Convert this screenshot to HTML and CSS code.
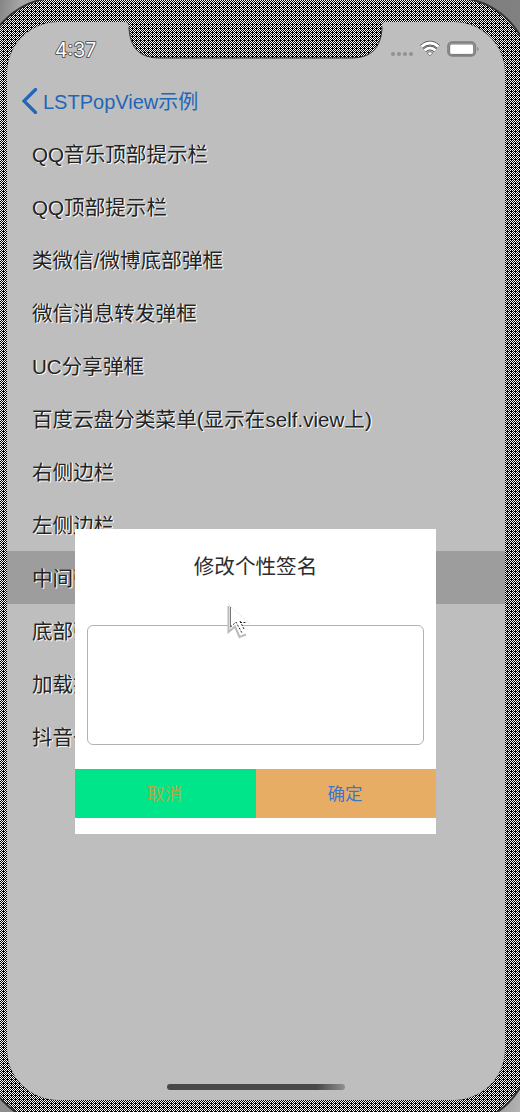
FILE: index.html
```
<!DOCTYPE html>
<html lang="zh-CN">
<head>
<meta charset="utf-8">
<title>LSTPopView示例</title>
<link rel="stylesheet" href="styles.css">
</head>
<body>
<div class="stage">
  <svg class="bezel" width="520" height="1112" viewBox="0 0 520 1112" aria-hidden="true">
    <defs>
      <pattern id="mesh" width="4" height="4" patternUnits="userSpaceOnUse" shape-rendering="crispEdges">
        <rect width="4" height="4" fill="#000"/>
        <path fill="#fff" d="M0 0h1v1H0zM2 0h1v1H2zM1 1h1v1H1zM3 1h1v1H3zM0 2h1v1H0zM2 2h1v1H2zM1 3h1v1H1z"/>
      </pattern>
    </defs>
    <rect x="-17" y="-2" width="547" height="1127" rx="75" fill="url(#mesh)" stroke="#333" stroke-width="2"/>
  </svg>
  <main class="screen">
    <header class="status">
      <span class="time">4:37</span>
      <svg class="signals" width="92" height="20" viewBox="0 0 92 20" aria-hidden="true">
        <g fill="#929292"><circle cx="6" cy="14" r="2.1"/><circle cx="12" cy="14" r="2.1"/><circle cx="18" cy="14" r="2.1"/><circle cx="24" cy="14" r="2.1"/></g>
        <g fill="none" stroke="#444" stroke-width="4.2"><path d="M34.500 6.800Q43 -.7 51.500 6.800M37.500 10.400Q43 5.600 48.500 10.400"/></g>
        <g fill="none" stroke="#fff" stroke-width="2.800"><path d="M34.500 6.800Q43 -.7 51.500 6.800M37.500 10.400Q43 5.600 48.500 10.400"/></g>
        <path d="M40.2 12.800Q43 10.600 45.800 12.800L43 15.800z" fill="#fff" stroke="#555" stroke-width=".7"/>
        <rect x="61" y="2.100" width="27.300" height="13.800" rx="4" fill="#bebebe" stroke="#808080" stroke-width="1.700"/>
        <rect x="62.700" y="4" width="24" height="10.400" rx="2" fill="#fff" stroke="#444" stroke-width=".7"/>
        <path d="M90.400 6.800q2.200 2.200 0 4.400z" fill="#777"/>
      </svg>
    </header>
    <nav class="nav">
      <svg width="16" height="26" viewBox="0 0 16 26" aria-hidden="true"><path d="M13.500 1.500L2 13l11.500 11.500" fill="none" stroke="#2266b8" stroke-width="3.200" stroke-linecap="round"/></svg>
      <span>LSTPopView示例</span>
    </nav>
    <ul class="list">
      <li>QQ音乐顶部提示栏</li>
      <li>QQ顶部提示栏</li>
      <li>类微信/微博底部弹框</li>
      <li>微信消息转发弹框</li>
      <li>UC分享弹框</li>
      <li>百度云盘分类菜单(显示在self.view上)</li>
      <li>右侧边栏</li>
      <li>左侧边栏</li>
      <li class="selected">中间弹框</li>
      <li>底部弹框</li>
      <li>加载提示</li>
      <li>抖音一</li>
    </ul>
    <div class="home"></div>
  </main>
  <svg class="notch" width="262" height="38" viewBox="0 0 262 38" aria-hidden="true">
    <path d="M0 0H262V1H260Q257 1 257 6V8Q255 37 227 37H34Q6 37 4 8V6Q4 1 0 1z" fill="url(#mesh)"/>
    <path d="M4 6V8Q6 37 34 37H227Q255 37 257 8V6" fill="none" stroke="#333" stroke-width="1"/>
  </svg>
  <section class="dialog">
    <h1>修改个性签名</h1>
    <div class="field"></div>
    <div class="actions"><button class="cancel">取消</button><button class="confirm">确定</button></div>
  </section>
  <svg class="cursor" width="34" height="44" viewBox="0 0 34 44" aria-hidden="true">
    <path d="M5 4V33L12 27L17 37L23 34L18 24H27z" fill="#fff"/>
    <path d="M5.500 6V32L12 26.500L16.500 37L23 34.500" fill="none" stroke="#bbb" stroke-width="2"/>
    <path d="M7.500 7V27" stroke="#777"/>
    <path d="M5 4L27 24" stroke="#dcdce6" stroke-dasharray="1 1"/>
    <path d="M7.500 27L13 22L19 33M17 22.500H24M17 21L21 29" fill="none" stroke="#222" stroke-dasharray="2 1.500"/>
  </svg>
</div>
</body>
</html>
```
FILE: styles.css
```
* { box-sizing: border-box; }
body { margin: 0; font-family: "Liberation Sans", "Noto Sans CJK SC", sans-serif; }
.stage {
  position: relative;
  width: 520px;
  height: 1112px;
  padding: 22px 15px 12px 7px;
  overflow: hidden;
  background: linear-gradient(100deg, #858585 0, #a6a6a6 3%, #777 50%, #8a8a8a 94%, #b4b4b4 100%);
}
.bezel { position: absolute; inset: 0; }
.screen {
  position: relative;
  display: flex;
  flex-direction: column;
  width: 498px;
  height: 1078px;
  border-radius: 51px;
  background: #bebebe;
  box-shadow: 0 0 1px #111;
  overflow: hidden;
}
.status {
  display: flex;
  justify-content: space-between;
  height: 52px;
  padding: 13px 26px 0 48px;
}
.time {
  color: #fff;
  font-family: Inter, sans-serif;
  font-size: 19.500px;
  line-height: 30px;
  -webkit-text-stroke: 1.600px #444;
  paint-order: stroke fill;
}
.signals { margin-top: 5px; }
.nav {
  display: flex;
  align-items: center;
  gap: 5px;
  height: 53px;
  padding-left: 15px;
  color: #2266b8;
  font-size: 20px;
}
.list { margin: 0; padding: 0; list-style: none; }
.list li {
  height: 53px;
  padding-left: 25px;
  color: #222;
  font-size: 20.600px;
  line-height: 56px;
  white-space: nowrap;
  text-shadow: 1px 0 0 #fff, 1px 1px 0 #f4f4f4;
}
.list .selected { background: #9d9d9d; }
.home {
  width: 178px;
  height: 6px;
  margin: auto 0 10px 160px;
  border-radius: 3px;
  background: linear-gradient(90deg, #484848 84%, #909090);
}
.notch { position: absolute; left: 125px; top: 21px; }
.dialog {
  position: absolute;
  left: 75px;
  top: 529px;
  width: 361px;
  height: 305px;
  background: #fff;
}
.dialog h1 {
  height: 74px;
  margin: 0;
  color: #2c2c2c;
  font-size: 20.600px;
  font-weight: 400;
  line-height: 75px;
  text-align: center;
}
.field {
  height: 120px;
  margin: 22px 12px 24px;
  border: 1.500px solid #b2b2b2;
  border-radius: 6px;
}
.actions { display: grid; grid-template-columns: 181px 180px; height: 49px; }
.actions button {
  padding: 0 2px 2px 0;
  border: 0;
  font: 17.500px "Noto Sans CJK SC", sans-serif;
}
.cancel { background: #00e58a; color: #b4a947; }
.confirm { background: #e8ad65; color: #3879c8; }
.cursor { position: absolute; left: 223px; top: 600px; }
```
